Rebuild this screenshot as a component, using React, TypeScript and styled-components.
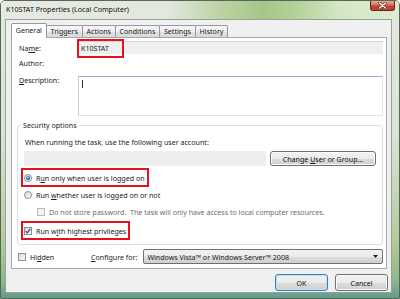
import styled, { createGlobalStyle } from "styled-components"

const GlobalStyle = createGlobalStyle`
  * { box-sizing: border-box; }
  html, body { margin: 0; padding: 0; background: #fff; }
  body {
    font-family: "Noto Sans", "Open Sans", sans-serif;
    font-size: 7.1px;
    color: #1b1b1b;
  }
`

const Window = styled.div`
  width: 400px;
  height: 299px;
  display: flex;
  flex-direction: column;
  border: 1px solid #56675a;
  border-radius: 5px 5px 0 0;
  overflow: hidden;
  background: linear-gradient(to bottom, #e4e9e1 0%, #dbe3d5 45%, #b4cc9e 80%, #8fb98a 94%, #5f9d8f 100%);
`
const TitleBar = styled.div`
  height: 18px;
  flex: none;
  display: flex;
  align-items: flex-start;
  justify-content: space-between;
  padding: 0 4px 0 5px;
  background: linear-gradient(to right, #e6eae3 0%, #e2e8dd 42%, #bcd3a3 55%, #a6c689 66%, #b5d39b 75%, #d3e7c4 85%, #dcecd0 100%);
`
const Title = styled.span`
  line-height: 16px;
  font-size: 7.1px;
  color: #111;
  white-space: nowrap;
`
const CloseButton = styled.div`
  width: 25px;
  height: 10px;
  display: flex;
  align-items: center;
  justify-content: center;
  border: 1px solid #6b2318;
  border-top: none;
  border-radius: 0 0 3px 3px;
  background: linear-gradient(#eaa897 0%, #d8705a 45%, #c1432d 55%, #b94330 100%);
`
const Client = styled.div`
  flex: 1;
  margin: 0 7px 6px 4px;
  border: 1px solid #95a295;
  background: #f0f0f0;
  display: flex;
  flex-direction: column;
  padding: 3px 4px 1px 5px;
`
const TabStrip = styled.div`
  height: 14px;
  flex: none;
  display: flex;
  align-items: flex-start;
  position: relative;
  z-index: 1;
`
const Tab = styled.div<{ $active?: boolean }>`
  height: ${p => (p.$active ? 15 : 12)}px;
  margin-top: ${p => (p.$active ? 0 : 2)}px;
  margin-left: -1px;
  padding: 0 3.8px;
  border: 1px solid #959aa2;
  border-bottom: none;
  border-radius: 2px 2px 0 0;
  line-height: ${p => (p.$active ? 12 : 10)}px;
  white-space: nowrap;
  background: ${p => (p.$active ? "#fff" : "linear-gradient(#f6f6f6 0%, #eeeeee 50%, #e2e2e2 51%, #d9d9d9 100%)")};
  &:first-child { margin-left: 0; }
`
const Panel = styled.div`
  flex: 1;
  display: flex;
  flex-direction: column;
  background: #fff;
  border: 1px solid #a5a9ae;
  padding: 0 3px 4px 5px;
`
const FieldRow = styled.div<{ $h: number; $mt: number }>`
  display: grid;
  grid-template-columns: 61px 1fr;
  height: ${p => p.$h}px;
  margin-top: ${p => p.$mt}px;
  align-items: center;
`
const Label = styled.span<{ $top?: boolean }>`
  padding-left: 2px;
  line-height: 10px;
  white-space: nowrap;
  align-self: ${p => (p.$top ? "start" : "center")};
  margin-top: ${p => (p.$top ? -1 : 0)}px;
`
const ReadOnlyBox = styled.div`
  height: 13px;
  display: flex;
  align-items: center;
  background: #efefef;
  border-top: 1px solid #d4d4d4;
`
const Marked = styled.span`
  width: 43px;
  height: 15px;
  margin-left: 1px;
  padding-left: 2px;
  display: inline-flex;
  align-items: center;
  outline: 2px solid #e3121c;
  white-space: nowrap;
`
const TextArea = styled.div`
  height: 40px;
  border: 1px solid;
  border-color: #9cb2cb #dde6ee #dde6ee #c3d0de;
  padding: 3px 0 0 3px;
`
const Caret = styled.div`
  width: 1px;
  height: 8px;
  background: #333;
`
const Group = styled.fieldset`
  margin: 4px 0 0;
  padding: 0 6px 7px 5px;
  border: 1px solid #d5dfe5;
  border-radius: 3px;
  min-width: 0;
`
const Legend = styled.legend`
  padding: 0 2px;
  margin-left: -2px;
  line-height: 10px;
`
const GroupBody = styled.div`
  display: flex;
  flex-direction: column;
  align-items: flex-start;
`
const Note = styled.div`
  margin: 7px 0 0 2px;
  line-height: 10px;
  white-space: nowrap;
`
const AccountRow = styled.div`
  align-self: stretch;
  display: flex;
  gap: 4px;
  height: 15px;
  margin-top: 4px;
`
const AccountBox = styled.div`
  flex: 1;
  margin-left: 1px;
  background: #eeeeee;
`
const PushButton = styled.div<{ $w: number; $h: number; $default?: boolean }>`
  width: ${p => p.$w}px;
  height: ${p => p.$h}px;
  display: flex;
  align-items: center;
  justify-content: center;
  white-space: nowrap;
  color: #111;
  border: 1px solid ${p => (p.$default ? "#3c7fb1" : "#707070")};
  border-radius: 3px;
  box-shadow: ${p => (p.$default ? "inset 0 0 0 1px #b9e3f7" : "inset 0 0 0 1px #fbfbfb")};
  background: linear-gradient(#f2f2f2 0%, #ebebeb 50%, #dddddd 51%, #cfcfcf 100%);
`
const OptionRow = styled.div<{ $mt: number; $indent?: number; $marked?: boolean; $dim?: boolean }>`
  display: flex;
  align-items: center;
  gap: 4px;
  height: ${p => (p.$marked ? 13 : 12)}px;
  margin-top: ${p => p.$mt}px;
  margin-left: ${p => (p.$indent ?? 0) + 1}px;
  padding-right: ${p => (p.$marked ? 1 : 0)}px;
  white-space: nowrap;
  color: ${p => (p.$dim ? "#6d6d6d" : "inherit")};
  outline: ${p => (p.$marked ? "2px solid #e3121c" : "none")};
  outline-offset: 1px;
`
const Radio = styled.span<{ $on?: boolean }>`
  width: 8px;
  height: 8px;
  flex: none;
  display: flex;
  align-items: center;
  justify-content: center;
  border-radius: 50%;
  border: 1px solid #8c8f93;
  background: linear-gradient(135deg, #d9d9d9, #fafafa);
  &::after {
    content: "";
    display: ${p => (p.$on ? "block" : "none")};
    width: 4px;
    height: 4px;
    border-radius: 50%;
    background: radial-gradient(circle at 35% 35%, #8fe0f8 0%, #2a78b0 45%, #173a5e 100%);
  }
`
const Check = styled.span<{ $dim?: boolean }>`
  width: 8px;
  height: 8px;
  flex: none;
  display: flex;
  align-items: center;
  justify-content: center;
  border: 1px solid ${p => (p.$dim ? "#b8b8b8" : "#8c8f93")};
  background: ${p => (p.$dim ? "#f4f4f4" : "linear-gradient(135deg, #d9d9d9, #fafafa)")};
`
const BottomRow = styled.div`
  display: grid;
  grid-template-columns: 68px auto 1fr;
  align-items: center;
  column-gap: 6px;
  height: 15px;
  margin-top: 4px;
`
const HiddenOption = styled.div`
  display: flex;
  align-items: center;
  gap: 4px;
  margin-left: 1px;
  white-space: nowrap;
`
const Combo = styled.div`
  height: 15px;
  display: flex;
  align-items: center;
  justify-content: space-between;
  padding: 0 4px 0 3px;
  border: 1px solid #707070;
  border-radius: 2px;
  white-space: nowrap;
  background: linear-gradient(#f2f2f2 0%, #ebebeb 50%, #dddddd 51%, #cfcfcf 100%);
`
const ButtonRow = styled.div`
  flex: none;
  display: flex;
  justify-content: flex-end;
  gap: 7px;
  margin: 5px -1px 0 0;
`

const tabs = ["General", "Triggers", "Actions", "Conditions", "Settings", "History"]

const Tick = () => (
  <svg width="6" height="6" viewBox="0 0 6 6">
    <path d="M0.6 3.1 L2.3 4.8 L5.4 0.9" fill="none" stroke="#2b4a7a" strokeWidth="1.3" />
  </svg>
)

export default function App() {
  return (
    <>
      <GlobalStyle />
      <Window>
        <TitleBar>
          <Title>K10STAT Properties (Local Computer)</Title>
          <CloseButton>
            <svg width="9" height="7" viewBox="0 0 9 7">
              <path d="M1.5 1 L7.5 6 M7.5 1 L1.5 6" stroke="#5a1c12" strokeWidth="2.6" strokeLinecap="round" />
              <path d="M1.5 1 L7.5 6 M7.5 1 L1.5 6" stroke="#fff" strokeWidth="1.5" strokeLinecap="round" />
            </svg>
          </CloseButton>
        </TitleBar>
        <Client>
          <TabStrip>
            {tabs.map((t, i) => (
              <Tab key={t} $active={i === 0}>{t}</Tab>
            ))}
          </TabStrip>
          <Panel>
            <FieldRow $h={13} $mt={3}>
              <Label>Na<u>m</u>e:</Label>
              <ReadOnlyBox>
                <Marked>K10STAT</Marked>
              </ReadOnlyBox>
            </FieldRow>
            <FieldRow $h={12} $mt={3}>
              <Label>Author:</Label>
            </FieldRow>
            <FieldRow $h={40} $mt={7}>
              <Label $top><u>D</u>escription:</Label>
              <TextArea>
                <Caret />
              </TextArea>
            </FieldRow>
            <Group>
              <Legend>Security options</Legend>
              <GroupBody>
                <Note>When running the task, use the following user account:</Note>
                <AccountRow>
                  <AccountBox />
                  <PushButton $w={106} $h={15}>
                    <span>Change <u>U</u>ser or Group...</span>
                  </PushButton>
                </AccountRow>
                <OptionRow $mt={5} $marked>
                  <Radio $on />
                  <span>R<u>u</u>n only when user is logged on</span>
                </OptionRow>
                <OptionRow $mt={5}>
                  <Radio />
                  <span>Run <u>w</u>hether user is logged on or not</span>
                </OptionRow>
                <OptionRow $mt={5} $indent={13} $dim>
                  <Check $dim />
                  <span>Do not store password.&nbsp; The task will only have access to local computer resources.</span>
                </OptionRow>
                <OptionRow $mt={6} $marked>
                  <Check>
                    <Tick />
                  </Check>
                  <span>Run w<u>i</u>th highest privileges</span>
                </OptionRow>
              </GroupBody>
            </Group>
            <BottomRow>
              <HiddenOption>
                <Check />
                <span>Hi<u>d</u>den</span>
              </HiddenOption>
              <span><u>C</u>onfigure for:</span>
              <Combo>
                <span>Windows Vista™ or Windows Server™ 2008</span>
                <svg width="5" height="3" viewBox="0 0 5 3">
                  <path d="M0 0 H5 L2.5 3 Z" fill="#222" />
                </svg>
              </Combo>
            </BottomRow>
          </Panel>
          <ButtonRow>
            <PushButton $w={53} $h={17} $default>OK</PushButton>
            <PushButton $w={53} $h={17}>Cancel</PushButton>
          </ButtonRow>
        </Client>
      </Window>
    </>
  )
}
